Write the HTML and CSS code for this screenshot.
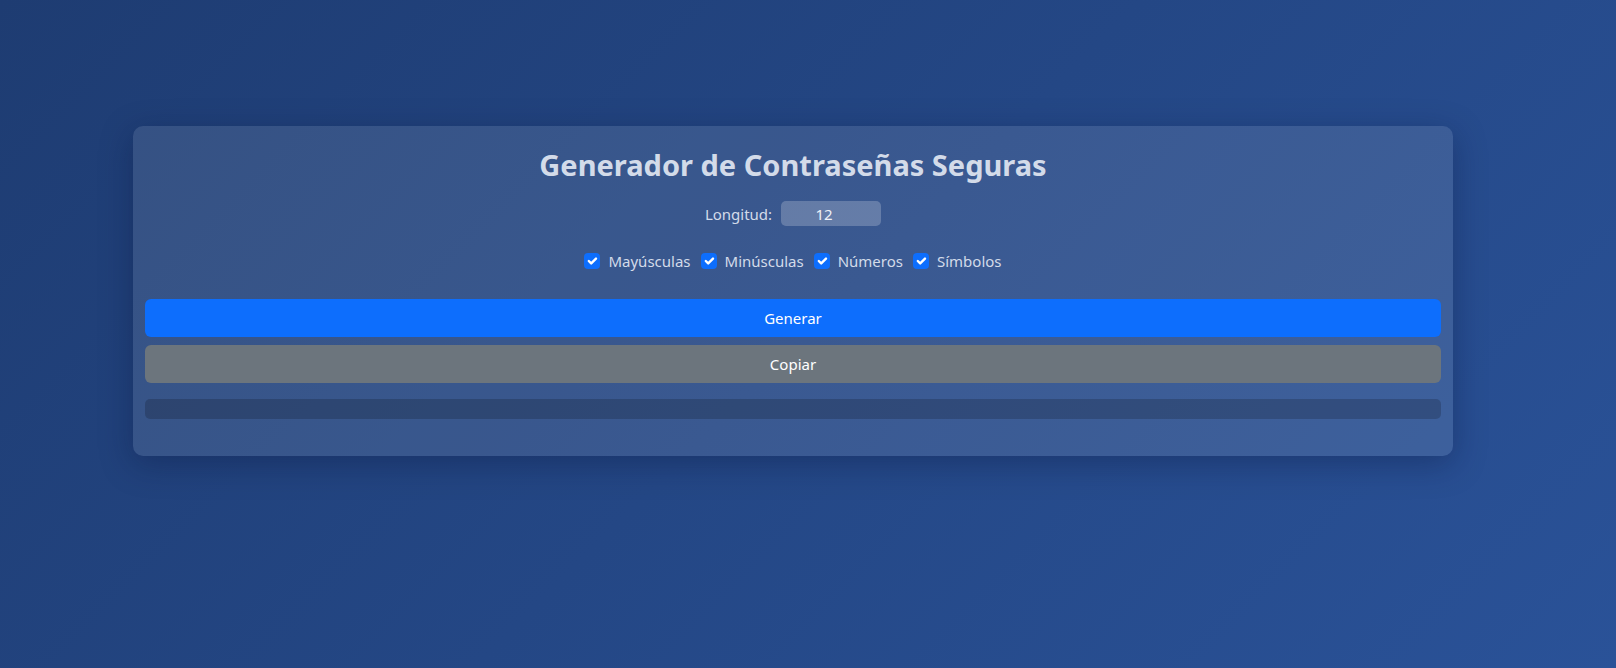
FILE: index.html
```html
<!DOCTYPE html>
<html lang="es">
<head>
<meta charset="utf-8">
<title>Generador de Contraseñas Seguras</title>
<link rel="stylesheet" href="styles.css">
</head>
<body>
<main class="card">
  <h1 class="title">Generador de Contraseñas Seguras</h1>
  <div class="length-row">
    <label class="length-label" for="length">Longitud:</label>
    <input class="length-input" id="length" type="number" value="12">
  </div>
  <div class="options">
    <label class="option"><input type="checkbox" class="check" checked> Mayúsculas</label>
    <label class="option"><input type="checkbox" class="check" checked> Minúsculas</label>
    <label class="option"><input type="checkbox" class="check" checked> Números</label>
    <label class="option"><input type="checkbox" class="check" checked> Símbolos</label>
  </div>
  <button class="btn btn-primary">Generar</button>
  <button class="btn btn-secondary">Copiar</button>
  <div class="output"></div>
</main>
</body>
</html>
```
FILE: styles.css
```css
* { box-sizing: border-box; }
html, body { margin: 0; height: 100%; }
body {
  background: linear-gradient(135deg, #1e3c72 0%, #2a5298 100%);
  font-family: "Noto Sans", "Open Sans", sans-serif;
  font-size: 16px;
  color: #d3dbe9;
  padding: 126px 0 0 133px;
}
.card {
  width: 1320px;
  padding: 20px 12px 37px;
  border-radius: 10px;
  background: rgba(255, 255, 255, 0.1);
  box-shadow: 0 8px 32px rgba(10, 20, 60, 0.35);
  display: flex;
  flex-direction: column;
}
.title {
  margin: 0;
  text-align: center;
  font-size: 29px;
  font-weight: 700;
  line-height: 38px;
  color: #d3dbe9;
}
.length-row {
  display: flex;
  justify-content: center;
  align-items: center;
  gap: 9px;
  margin-top: 17px;
}
.length-label { font-size: 15px; }
.length-input {
  width: 100px;
  height: 25px;
  border: none;
  border-radius: 5px;
  background: rgba(255, 255, 255, 0.22);
  color: #eef2f8;
  font-family: inherit;
  font-size: 15px;
  text-align: center;
  padding: 0 14px 0 0;
  outline: none;
  -moz-appearance: textfield;
}
.length-input::-webkit-inner-spin-button,
.length-input::-webkit-outer-spin-button { -webkit-appearance: none; margin: 0; }
.options {
  display: flex;
  justify-content: center;
  align-items: center;
  gap: 10px;
  margin-top: 25px;
  font-size: 15px;
}
.option {
  display: flex;
  align-items: center;
  gap: 8px;
}
.check {
  -webkit-appearance: none;
  appearance: none;
  margin: 0;
  width: 16px;
  height: 16px;
  border-radius: 4px;
  background-color: #0d6efd;
  background-image: url("data:image/svg+xml,%3csvg xmlns='http://www.w3.org/2000/svg' viewBox='0 0 20 20'%3e%3cpath fill='none' stroke='%23fff' stroke-linecap='round' stroke-linejoin='round' stroke-width='3' d='m6 10 3 3 6-6'/%3e%3c/svg%3e");
  background-size: 100% 100%;
}
.btn {
  display: block;
  width: 100%;
  height: 38px;
  border: none;
  border-radius: 6px;
  color: #fff;
  font-family: inherit;
  font-size: 15px;
}
.btn-primary { background: #0d6efd; margin-top: 28px; }
.btn-secondary { background: #6c757d; margin-top: 8px; }
.output {
  height: 20px;
  margin-top: 16px;
  border-radius: 5px;
  background: rgba(0, 0, 0, 0.18);
}
```
